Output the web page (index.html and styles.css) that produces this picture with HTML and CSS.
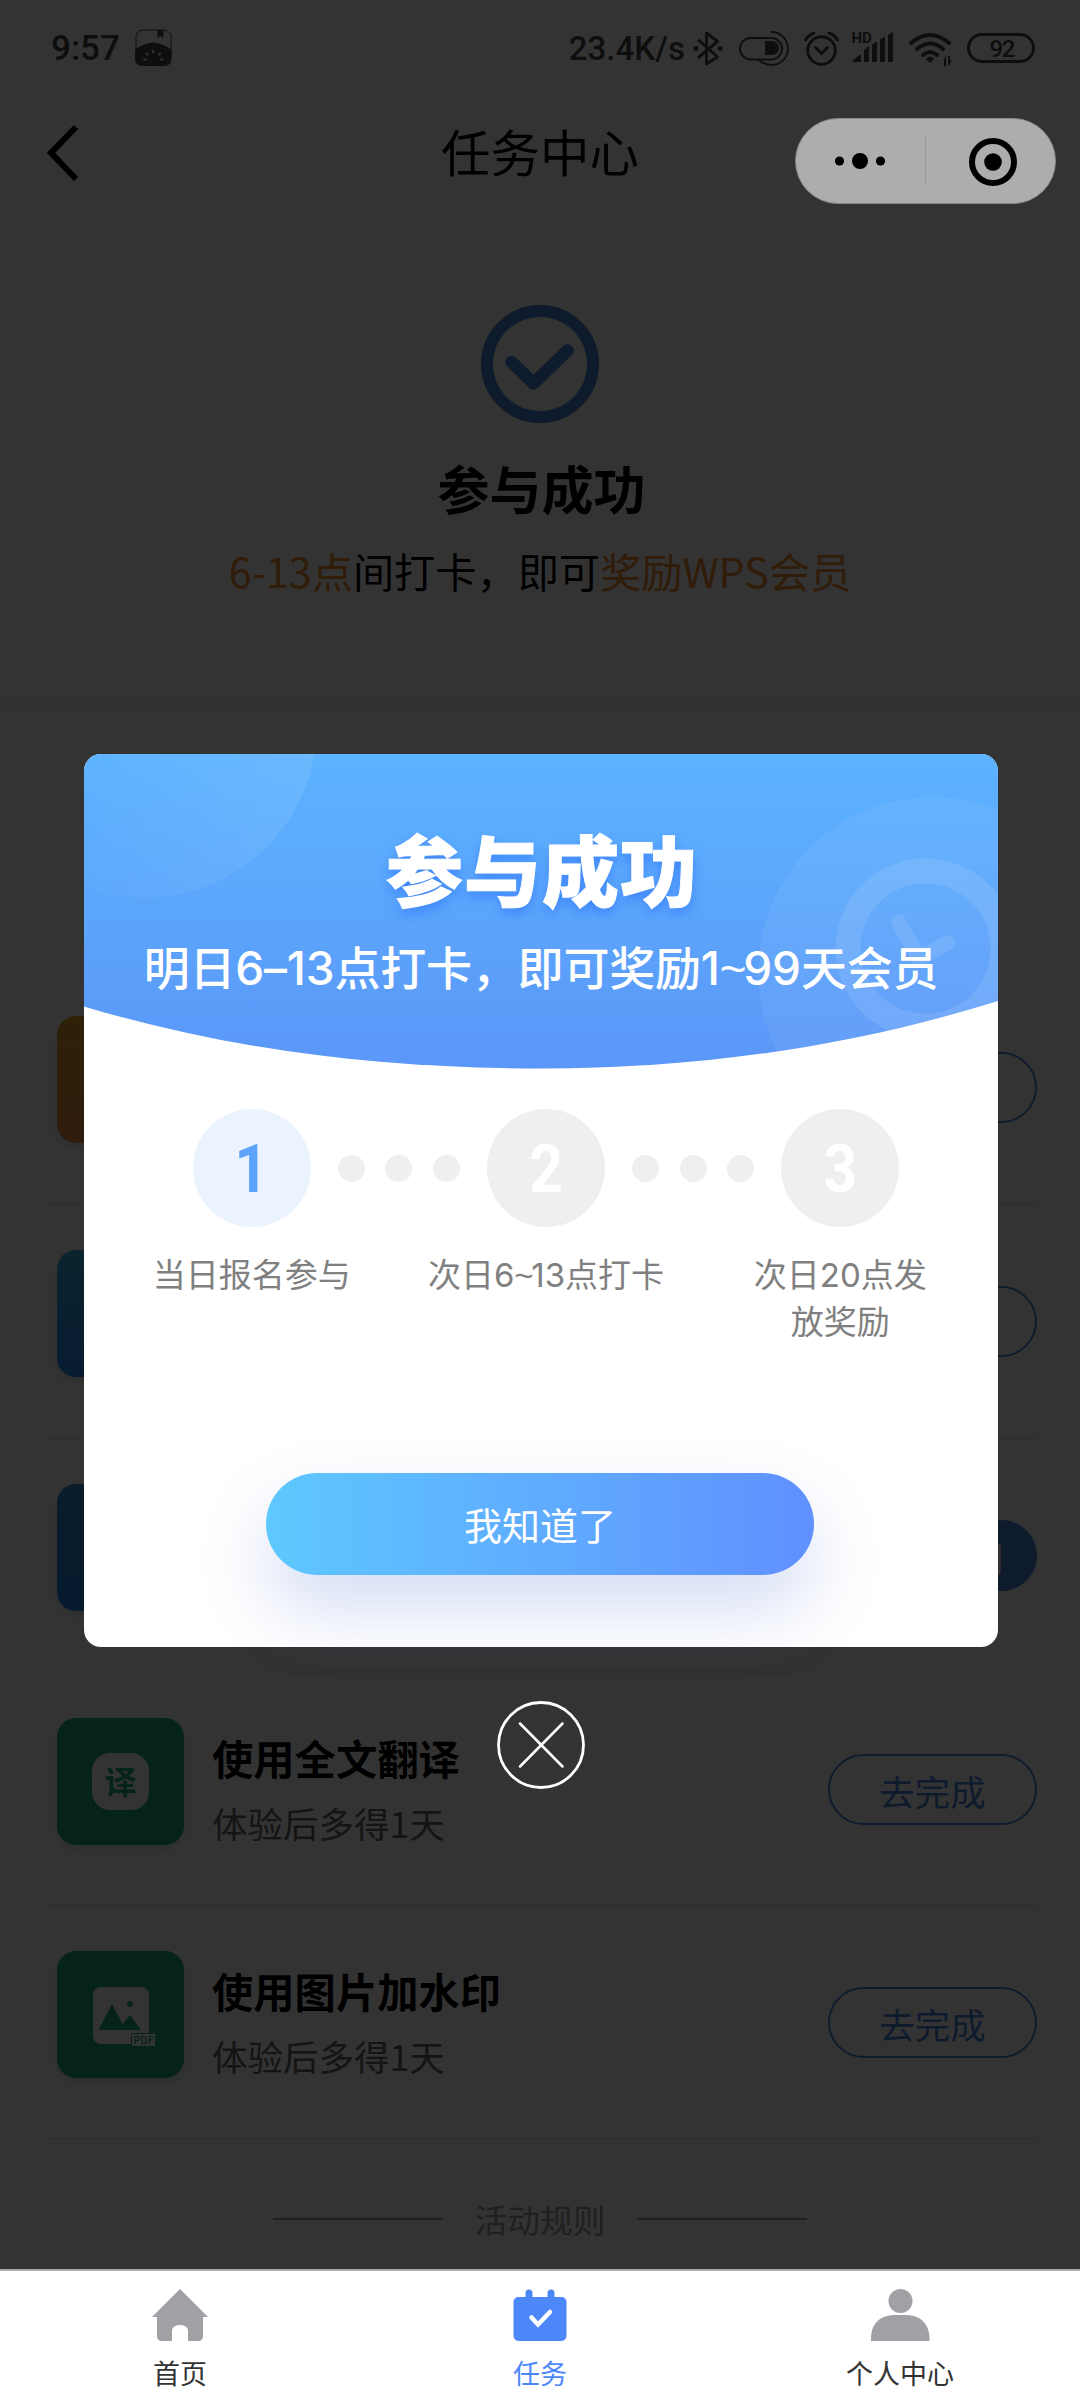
FILE: index.html
```html
<!DOCTYPE html>
<html lang="zh-CN">
<head>
<meta charset="utf-8">
<title>任务中心</title>
<link rel="stylesheet" href="styles.css">
</head>
<body>
<div class="phone">
  <div class="page">
    <header class="status">
      <span class="clock">9:57</span>
      <svg class="app-badge" width="38" height="38" viewBox="0 0 38 38"><rect x="1" y="1" width="35" height="35" rx="7" fill="none" stroke="#464646"/><path d="M0 21Q18 6 36.500 21V30Q36.500 37 29 37H8Q0 37 0 30Z"/><path d="M22.500 1h6v8l-3-2-3 2z"/><g stroke="#fff" stroke-width="2" stroke-linecap="round"><path d="M18 22v1.500M11.500 24.500l1 1.200M25 24.500l-1 1.200M9 30.500h1.500M26 30.500h1.500"/></g></svg>
      <span class="speed">23.4K/s</span>
      <svg class="status-icons" width="346" height="38" viewBox="692 29 346 38">
        <g fill="none" stroke="#464646" stroke-width="3">
          <path d="M699 40.500 717.500 57 706.500 64V33L717.500 41.500 699 57" stroke-linejoin="round" stroke-linecap="round"/>
          <rect x="740" y="38" width="42" height="21.500" rx="10.700" stroke-width="2"/>
          <path d="M771 32a16 16 0 0 1 1 33q-8 0-13-5" stroke-width="1.800"/>
          <circle cx="821.500" cy="50.500" r="13.800"/>
          <path d="M815.500 47.500l6 6 6-6M805.500 40q3-5 8.500-7M837.500 40q-3-5-8.500-7" stroke-linecap="round"/>
          <path d="M911 43q19-16 38 0M917 49q13-11 26 0M923 55q7-6 14 0" stroke-width="4" stroke-linecap="round"/>
          <rect x="968.500" y="34.500" width="65" height="27" rx="13.500"/>
        </g>
        <circle cx="696" cy="48.500" r="2.500"/><circle cx="720" cy="48.500" r="2.500"/>
        <path d="M765 41h7a7 7 0 0 1 0 14H765z"/>
        <path d="M853 62v-2l8-6v8zM864 62V50l5-4v16zM872 62V44.500l5-3V62zM880 62V39.500l5-3V62zM888 62V35l5-3v30zM930 63l-4-4q4-5 8 0zM943 60l3-4v10h-2v-6zM948 66V56h2v4l2 1z"/>
        <text x="851.500" y="43" font-size="15">HD</text>
        <text class="charge" x="989.500" y="56.800" font-size="24" letter-spacing="-1.500">92</text>
      </svg>
    </header>
    <nav class="navbar">
      <svg class="back" width="34" height="58" viewBox="0 0 34 58"><path d="M30 3 5 28.800 30 55" fill="none" stroke="#000" stroke-width="6"/></svg>
      <h1>任务中心</h1>
    </nav>
    <section class="result">
      <svg width="118" height="118" viewBox="0 0 118 118"><g fill="none" stroke="#4689dc" stroke-linecap="round" stroke-linejoin="round"><circle cx="59" cy="59" r="53" stroke-width="12"/><path d="M30.500 57 52.500 78.500 86.500 45.500" stroke-width="12.500"/></g></svg>
      <h2>参与成功</h2>
      <p><em>6-13点</em>间打卡，即可<em>奖励WPS会员</em></p>
    </section>
    <ul class="tasks">
      <li><span class="icon orange"></span><span class="go"></span></li>
      <li><span class="icon sky"></span><span class="go"></span></li>
      <li><span class="icon blue"></span><span class="go filled">打卡时间</span></li>
      <li>
        <span class="icon green"><b class="translate">译</b></span>
        <div class="info"><h3>使用全文翻译</h3><p>体验后多得1天</p></div>
        <span class="go">去完成</span>
      </li>
      <li>
        <span class="icon green"><svg width="127" height="127" viewBox="0 0 127 127"><rect x="36" y="36" width="56" height="57" rx="8" fill="#fff"/><path d="M41.500 79 55 53l10.500 20 7.500-9 11 15z" fill="#19b07a"/><circle cx="73" cy="53" r="2.800" fill="#19b07a"/><rect x="74.500" y="82.500" width="24" height="13" rx="1" fill="#fff" stroke="#19b07a"/><text x="76.500" y="93" font-size="10.500" textLength="20" fill="#19b07a">PDF</text></svg></span>
        <div class="info"><h3>使用图片加水印</h3><p>体验后多得1天</p></div>
        <span class="go">去完成</span>
      </li>
    </ul>
    <div class="rules"><i></i><span>活动规则</span><i></i></div>
  </div>

  <div class="mask">
    <div class="dialog">
      <div class="banner">
        <svg class="banner-bg" width="914" height="316" viewBox="84 754 914 316">
          <defs>
            <linearGradient id="sky" x1="0" y1="0" x2="0" y2="1"><stop offset="0" stop-color="#5cb3ff"/><stop offset="1" stop-color="#5b97f8"/></linearGradient>
            <linearGradient id="glow" x1="0" y1="0" x2="1" y2="0"><stop offset=".3" stop-color="#fff" stop-opacity=".01"/><stop offset="1" stop-color="#fff" stop-opacity=".09"/></linearGradient>
            <clipPath id="arc"><path d="M84 754H998V1001C850 1047 700 1068.500 540 1068.500C380 1068.500 230 1050 84 1006.500Z"/></clipPath>
          </defs>
          <g clip-path="url(#arc)">
            <rect x="84" y="754" width="914" height="315" fill="url(#sky)"/>
            <circle cx="144" cy="725" r="173" fill="url(#glow)"/>
            <circle cx="933" cy="972" r="175" fill="#fff" fill-opacity=".06"/>
            <g fill="none" stroke="#fff" stroke-opacity=".1" stroke-linecap="round" stroke-linejoin="round"><circle cx="925.500" cy="948.500" r="77.500" stroke-width="25"/><path d="M898.500 922 919 958 947.500 943" stroke-width="15"/></g>
          </g>
        </svg>
        <h2>参与成功</h2>
        <p>明日6–13点打卡，即可奖励1<span class="tilde">~</span>99天会员</p>
      </div>
      <ol class="steps">
        <li class="active"><b><i>1</i></b><p>当日报名参与</p></li>
        <li class="dots"><i></i><i></i><i></i></li>
        <li><b><i>2</i></b><p>次日6<span class="tilde">~</span>13点打卡</p></li>
        <li class="dots"><i></i><i></i><i></i></li>
        <li><b><i>3</i></b><p>次日20点发<br>放奖励</p></li>
      </ol>
      <button class="confirm">我知道了</button>
    </div>
    <svg class="close" width="88" height="88" viewBox="0 0 88 88"><g fill="none" stroke="#fff" stroke-width="2.800" stroke-linecap="round"><circle cx="44" cy="44" r="42.500"/><path d="M23 22.500 65.500 65.500M65.500 22.500 23 65.500" stroke-width="2.500"/></g></svg>
  </div>

  <svg class="capsule" width="261" height="86" viewBox="0 0 261 86"><rect x=".5" y=".5" width="260" height="85" rx="42.500" fill="#adadad" stroke="#888"/><path d="M130.500 17v51" stroke="#999"/><circle cx="44.500" cy="43" r="4.600"/><circle cx="65" cy="43" r="8"/><circle cx="85.500" cy="43" r="4.600"/><circle cx="198" cy="44" r="21" fill="none" stroke="#000" stroke-width="6"/><circle cx="198" cy="44" r="8.800"/></svg>

  <nav class="tabbar">
    <a><svg width="60" height="54" viewBox="0 0 60 54"><path d="M30 1 2 29H7V48Q7 53 12 53H22V43Q22 37 30 37T38 43V53H48Q53 53 53 48V29H58Z" fill="#9fa1a5"/></svg><span>首页</span></a>
    <a class="current"><svg width="60" height="54" viewBox="0 0 60 54"><rect x="3.500" y="9" width="53" height="44" rx="5" fill="#4d88fb"/><path d="M19 5v6M41 5v6" stroke="#4d88fb" stroke-width="7" stroke-linecap="round"/><path d="m21.500 29.500 6.500 7L40 24" fill="none" stroke="#fff" stroke-width="4.500" stroke-linecap="round"/></svg><span>任务</span></a>
    <a><svg width="60" height="54" viewBox="0 0 60 54"><circle cx="30.500" cy="13" r="12" fill="#9fa1a5"/><path d="M1 53V48Q3 27 26 27H35Q57 27 59.500 48V53Z" fill="#9fa1a5"/></svg><span>个人中心</span></a>
  </nav>
</div>
</body>
</html>
```
FILE: styles.css
```css
* { box-sizing: border-box; margin: 0; padding: 0; }
body { background: #fff; font-family: "Noto Sans CJK SC", sans-serif; }
ul, ol { list-style: none; }
svg { display: block; flex: none; }
em, i { font-style: normal; }

.phone { position: relative; width: 1080px; height: 2400px; overflow: hidden; }
.page { height: 2269px; overflow: hidden; background: #fff; color: #000; }

.status { display: flex; height: 102px; padding: 29px 42px 0 51px; color: #464646; fill: #464646; font-family: Roboto, sans-serif; font-weight: 500; }
.clock { width: 84px; font-size: 35px; line-height: 40px; }
.speed { margin-left: auto; margin-right: 7px; font-size: 33px; line-height: 40px; }
.status-icons text { font-family: Roboto, sans-serif; font-weight: 700; }
.status-icons .charge { font-weight: 500; }

.navbar { display: grid; grid-template-columns: 46px 1fr 46px; align-items: center; height: 101px; }
.back { grid-column: 1; margin-left: 46px; }
.navbar h1 { grid-column: 2; padding-bottom: 3px; font-size: 49.500px; font-weight: 400; line-height: 92px; text-align: center; }

.result { display: flex; flex-direction: column; align-items: center; height: 513px; padding-top: 102px; border-bottom: 18px solid #f2faf4; }
.result h2 { margin: 28px 0 0 3px; font-size: 52px; line-height: 74px; }
.result p { margin-top: 15px; font-size: 41.200px; line-height: 60px; }
.result em { color: #f08a28; }

.tasks { margin: 255px 43px 0 44px; }
.tasks li { display: flex; height: 233.850px; padding: 45px 0 0 13px; border-bottom: 2px solid #eaeaea; }
.icon { display: flex; flex: none; align-items: center; justify-content: center; width: 127px; height: 127px; border-radius: 19px; box-shadow: 0 5px 10px rgba(0, 60, 40, .14); }
.orange { background: linear-gradient(#e6a528, #ee8a40); }
.sky { background: linear-gradient(#37b4e6, #2a8af5); }
.blue { background: linear-gradient(#2b8cd2, #1f82e6); }
.green { background: #19b07a; }
.icon text { font-family: Roboto, sans-serif; font-weight: 500; }
.translate { width: 57px; height: 57px; border-radius: 18px; background: #fff; color: #19b07a; font-size: 32px; line-height: 54px; text-align: center; }
.info { margin-left: 28px; padding-top: 9px; }
.info h3 { font-size: 41.300px; line-height: 60px; white-space: nowrap; }
.info p { margin-top: 10px; color: #666; font-size: 35.500px; line-height: 52px; white-space: nowrap; }
.go { width: 209px; height: 71px; margin: 36px 0 0 auto; border: 2px solid #4689dc; border-radius: 36px; color: #4689dc; font-size: 35.500px; line-height: 70px; text-align: center; }
.filled { background: #4689dc; color: #fff; }

.rules { display: flex; align-items: center; justify-content: center; height: 158px; gap: 32px; color: #a0a0a0; font-size: 32.700px; line-height: 48px; }
.rules i { width: 170px; height: 2px; background: #999; }

.mask { position: absolute; inset: 0 0 131px; padding: 754px 82px 0 84px; background: rgba(0, 0, 0, .8); }
.dialog { display: flex; flex-direction: column; align-items: center; height: 893px; border-radius: 17px; background: #fff; }
.banner { position: relative; width: 100%; height: 355px; padding-top: 62px; color: #fff; text-align: center; overflow: hidden; border-radius: 17px 17px 0 0; }
.banner-bg { position: absolute; left: 0; top: 0; }
.banner h2, .banner p { position: relative; }
.banner h2 { padding-left: 2px; font-size: 77px; font-weight: 900; line-height: 104px; letter-spacing: 1px; -webkit-text-stroke: 1px #fff; text-shadow: 0 6px 12px #3f86fa; }
.banner p { margin-top: 15px; font-family: Inter, "Noto Sans CJK SC", sans-serif; font-size: 46px; font-weight: 500; line-height: 66px; letter-spacing: -.2px; white-space: nowrap; }
.tilde { font-family: "Liberation Sans", sans-serif; letter-spacing: -.07em; }

.steps { display: grid; grid-template-columns: 118px 176.300px 118px 176.300px 118px; width: 706.600px; margin-left: 10px; }
.steps li { display: flex; flex-direction: column; align-items: center; }
.steps b { display: flex; justify-content: center; width: 118px; height: 118px; border-radius: 50%; background: #efefef; color: #fff; font-family: Roboto, sans-serif; font-size: 67px; line-height: 121px; }
.steps b i { transform: scaleX(.87); }
.steps .active b { background: #ebf3ff; color: #5ca4fb; }
.steps p { margin-top: 25px; color: #808080; font-family: Inter, "Noto Sans CJK SC", sans-serif; font-size: 33px; line-height: 47px; text-align: center; white-space: nowrap; }
.steps .dots { flex-direction: row; justify-content: center; height: 118px; gap: 20.500px; }
.dots i { width: 27px; height: 27px; border-radius: 50%; background: #efefef; }

.confirm { width: 548px; height: 102px; margin: 127px 2px 0 0; border: 0; border-radius: 51px; background: linear-gradient(90deg, #5ec8ff, #6090ff); box-shadow: 0 35px 70px rgba(70, 105, 210, .22); color: #fff; font-family: inherit; font-size: 38px; line-height: 100px; }
.close { margin: 54px auto 0; }

.capsule { position: absolute; left: 795px; top: 118px; }

.tabbar { display: grid; grid-template-columns: repeat(3, 1fr); height: 131px; padding-top: 17px; border-top: 2px solid #aaa; background: #fff; position: relative; }
.tabbar a { display: flex; flex-direction: column; align-items: center; color: #333; font-size: 27px; line-height: 40px; }
.tabbar span { margin-top: 11px; }
.tabbar .current { color: #4d88fb; }
```
